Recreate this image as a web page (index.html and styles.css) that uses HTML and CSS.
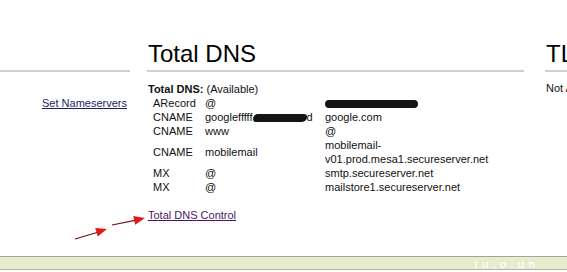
FILE: index.html
```html
<!DOCTYPE html>
<html>
<head>
<meta charset="utf-8">
<link rel="stylesheet" href="styles.css">
</head>
<body>
<div class="page">
  <div class="cols">
    <div class="col col-left">
      <div class="hd">&nbsp;</div>
      <div class="left-body"><a class="navy" href="#">Set Nameservers</a></div>
    </div>
    <div class="col col-mid">
      <div class="hd">Total DNS</div>
      <div class="status"><b>Total DNS:</b> (Available)</div>
      <div class="dns">
        <div>ARecord</div><div>@</div><div><span class="blob b1"></span></div>
        <div>CNAME</div><div>googlefffff<span class="blob b2"></span>d</div><div>google.com</div>
        <div>CNAME</div><div>www</div><div>@</div>
        <div class="mid">CNAME</div><div class="mid">mobilemail</div><div class="wrap">mobilemail-v01.prod.mesa1.secureserver.net</div>
        <div>MX</div><div>@</div><div>smtp.secureserver.net</div>
        <div>MX</div><div>@</div><div>mailstore1.secureserver.net</div>
      </div>
      <div class="ctrl"><a class="visited" href="#">Total DNS Control</a></div>
    </div>
    <div class="col col-right">
      <div class="hd">TL</div>
      <div class="status">Not A</div>
    </div>
  </div>
  <div class="band"><span class="wm">tu.o.un</span></div>
  <svg class="arrows" width="160" height="250" viewBox="0 0 160 250">
    <line x1="75" y1="239" x2="97" y2="232.5" stroke="#6a1212" stroke-width="1.2"/>
    <polygon points="107,229 97.8,236.6 95.2,228" fill="#e01818"/>
    <line x1="112" y1="225" x2="135" y2="220.3" stroke="#6a1212" stroke-width="1.2"/>
    <polygon points="145,218 135.1,224.7 133.3,215.9" fill="#e01818"/>
  </svg>
</div>
</body>
</html>
```
FILE: styles.css
```css
html, body {
  margin: 0;
  padding: 0;
  overflow: hidden;
  background: #fff;
}
body {
  font-family: "Liberation Sans", Arial, sans-serif;
  font-size: 11px;
  line-height: 14px;
  color: #111;
}
.page {
  position: relative;
  width: 567px;
  height: 272px;
  overflow: hidden;
}
.cols {
  display: flex;
  height: 256px;
}
.col-left {
  width: 130px;
  flex: none;
}
.col-mid {
  width: 377px;
  margin-left: 17px;
  flex: none;
}
.col-right {
  width: 22px;
  margin-left: 21px;
  flex: none;
  white-space: nowrap;
}
.hd {
  padding-top: 40px;
  padding-bottom: 2px;
  font-size: 24px;
  line-height: 28px;
  color: #000;
  border-bottom: 2px solid #cfcfcf;
  padding-left: 1px;
  white-space: nowrap;
}
.left-body {
  margin-top: 24px;
  text-align: right;
  padding-right: 3px;
}
a.navy {
  color: #1c1c6a;
  text-decoration: underline;
}
a.visited {
  color: #4a1866;
  text-decoration: underline;
}
.status {
  margin-top: 10px;
  padding-left: 1px;
}
.col-right .status {
  margin-top: 9px;
}
.dns {
  display: grid;
  grid-template-columns: 52px 120px 172px;
  padding-left: 6px;
}
.dns .mid {
  align-self: center;
}
.blob {
  display: inline-block;
  background: #141414;
  border-radius: 4px;
  vertical-align: middle;
}
.b1 {
  width: 93px;
  height: 8px;
}
.b2 {
  width: 54px;
  height: 8px;
  border-radius: 5px 3px 5px 3px;
}
.ctrl {
  margin-top: 14px;
  padding-left: 1px;
}
.band {
  height: 12px;
  border-top: 1px solid #a3a595;
  border-bottom: 1px solid #b2b4a4;
  background: #e6edcd;
  text-align: right;
  overflow: hidden;
  padding-right: 28px;
}
.wm {
  font-size: 11px;
  line-height: 12px;
  font-weight: bold;
  letter-spacing: 4px;
  color: rgba(255, 255, 255, 0.8);
}
.arrows {
  position: absolute;
  left: 0;
  top: 0;
}
```
